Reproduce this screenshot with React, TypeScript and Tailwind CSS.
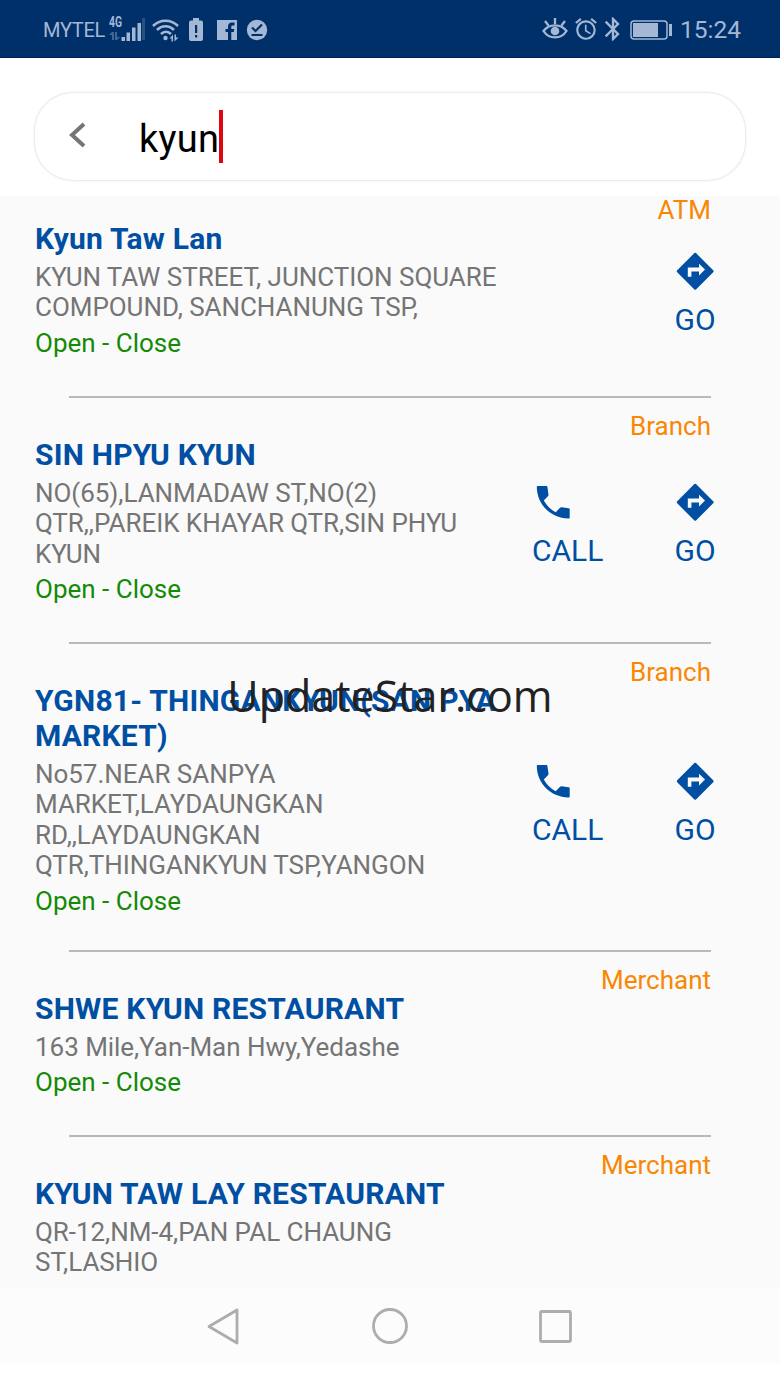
import React from 'react';
import { MdAlarm, MdBluetooth } from 'react-icons/md';
import { clsx } from 'clsx';

interface Place {
  type: string;
  name: string[];
  address: string[];
  hours?: string;
  call?: boolean;
  go?: boolean;
  // row height and space above the action icons
  spacing: string;
  actionTop: string;
}

const places: Place[] = [
  {
    type: 'ATM',
    name: ['Kyun Taw Lan'],
    address: ['KYUN TAW STREET, JUNCTION SQUARE', 'COMPOUND, SANCHANUNG TSP,'],
    hours: 'Open - Close',
    go: true,
    spacing: 'h-[216px]',
    actionTop: 'pt-[28px]',
  },
  {
    type: 'Branch',
    name: ['SIN HPYU KYUN'],
    address: ['NO(65),LANMADAW ST,NO(2)', 'QTR,,PAREIK KHAYAR QTR,SIN PHYU', 'KYUN'],
    hours: 'Open - Close',
    call: true,
    go: true,
    spacing: 'h-[246px]',
    actionTop: 'pt-[43px]',
  },
  {
    type: 'Branch',
    name: ['YGN81- THINGANKYUN(SAN PYA', 'MARKET)'],
    address: ['No57.NEAR SANPYA', 'MARKET,LAYDAUNGKAN', 'RD,,LAYDAUNGKAN', 'QTR,THINGANKYUN TSP,YANGON'],
    hours: 'Open - Close',
    call: true,
    go: true,
    spacing: 'h-[308px]',
    actionTop: 'pt-[76px]',
  },
  {
    type: 'Merchant',
    name: ['SHWE KYUN RESTAURANT'],
    address: ['163 Mile,Yan-Man Hwy,Yedashe'],
    hours: 'Open - Close',
    spacing: 'h-[185px]',
    actionTop: 'pt-0',
  },
  {
    type: 'Merchant',
    name: ['KYUN TAW LAY RESTAURANT'],
    address: ['QR-12,NM-4,PAN PAL CHAUNG', 'ST,LASHIO'],
    spacing: 'h-[216px]',
    actionTop: 'pt-0',
  },
];

const PhoneIcon: React.FC = () => (
  <svg className="mb-[9px] size-[44px]" viewBox="0 0 44 44" fill="currentColor">
    <path d="M5.900 6h8.300c.8 0 1.100.4 1.200 1.100l1.100 7.400c.1.700-.1 1.200-.6 1.700l-4.100 4.300c3 5.300 6.700 9 11.900 11.700l4.300-4.400c.5-.5 1-.7 1.700-.6l6.900 1c.8.1 1.100.5 1.100 1.200v8.100c0 .7-.4 1.100-1.100 1.100C18.200 38.100 4.900 24 4.800 7.100c0-.7.4-1.100 1.100-1.100z" />
  </svg>
);

const DirectionsIcon: React.FC = () => (
  <svg className="mb-[9px] size-[44px]" viewBox="0 0 44 44" fill="currentColor">
    <path d="M23 4.100l17.200 17.200q1 1 0 2L23 40.400q-.8.800-1.600 0L4.200 23.300q-1-1 0-2L21.400 4.100q.8-.8 1.600 0z" />
    <path d="M14.800 27.700v-9.200h11.200v-3.800l6 5.900-6 5.900v-4h-7.600v5.200z" fill="#fafafa" />
  </svg>
);

const StatusBar: React.FC = () => (
  <header className="flex h-[58px] shrink-0 items-center border-b border-[#00205a] bg-[#00306a] pt-[2px] pr-[38px] pl-[43px] text-[#a4b8d6]">
    <span className="w-[62px] text-[20px] tracking-[-0.3px] whitespace-nowrap">MYTEL</span>

    {/* 4G signal */}
    <svg className="ml-1 h-[28px] w-[38px]" viewBox="0 0 38 28" fill="currentColor">
      <text x="0" y="11" fontSize="14" fontWeight="700" textLength="13" lengthAdjust="spacingAndGlyphs">4G</text>
      <g opacity=".4">
        <path d="M3 16v8H5v-8zM0 19l3-3v3zM8 16v8H6v-8zM8 24l3-3H8z" />
        <path d="M33 2h3v22h-3z" opacity=".6" />
      </g>
      <path d="M12.500 21h3.500v4h-3.500zM17.500 16.500h3.500V25h-3.500zM23 11.500h3.500V25H23zM28.500 7H32v18h-3.500z" />
    </svg>

    {/* Wi-Fi */}
    <svg className="mb-[2px] ml-[5px] h-[28px] w-[28px]" viewBox="0 0 28 28" fill="none" stroke="currentColor" strokeWidth="2.600">
      <path d="M1 11c7-7 18-7 25 0M5 15c5-5 12-5 17 0M9 19c3-3 7-3 10 0" />
      <circle cx="13.500" cy="23" r="2.200" fill="currentColor" stroke="none" />
      <path d="M17.500 23.500l3.500-4v7h-1.500v-3zM22.500 19.500v7l4-4H24v-3z" fill="currentColor" stroke="none" />
    </svg>

    {/* battery warning */}
    <svg className="ml-[8px] h-[24px] w-[16px]" viewBox="0 0 16 24" fill="currentColor">
      <path d="M5 0h6v2.500h2a2 2 0 0 1 2 2V21a2 2 0 0 1-2 2H3a2 2 0 0 1-2-2V4.500a2 2 0 0 1 2-2h2z" />
      <path d="M7 7h2.200v8H7zM7 17h2.200v2.400H7z" fill="#00306a" />
    </svg>

    {/* Facebook */}
    <svg className="ml-[13px] h-[20px] w-[20px]" viewBox="0 0 20 20">
      <path d="M0 0h20v20H0z" fill="currentColor" />
      <path d="M11 20v-8H8.500V9H11V6.500C11 4 12.600 2.500 15 2.500h2.500v3h-1.700c-1 0-1.500.5-1.500 1.300V9h3l-.5 3h-2.500v8z" fill="#00306a" />
    </svg>

    {/* done */}
    <svg className="ml-[9px] h-[22px] w-[22px]" viewBox="0 0 22 22">
      <circle cx="11" cy="11" r="10.200" fill="currentColor" />
      <path d="M6 8.500l3.500 3.500L16 5.500M5.500 16h11" fill="none" stroke="#00306a" strokeWidth="2.200" />
    </svg>

    <div className="ml-auto flex items-center">
      {/* eye comfort */}
      <svg className="mb-[2px] h-[24px] w-[26px]" viewBox="0 0 26 24" fill="none" stroke="currentColor" strokeWidth="2.300">
        <path d="M1.500 14C7 6.500 19 6.500 24.500 14 19 22.500 7 22.500 1.500 14zM13 1v6M3 4l3.500 4.500M23 4l-3.500 4.500" />
        <circle cx="13" cy="14" r="4.300" fill="currentColor" stroke="none" />
      </svg>
      <MdAlarm className="mb-px ml-[5px] h-[26px] w-[26px]" />
      <MdBluetooth className="mb-px h-[28px] w-[28px]" />
      <svg className="ml-[3px] h-[20px] w-[43px]" viewBox="0 0 43 20">
        <rect x="1" y="1" width="36" height="18" rx="3" fill="none" stroke="currentColor" strokeWidth="1.500" />
        <path d="M3 3h25v14H3zM39 4h3v12h-3z" fill="currentColor" />
      </svg>
      <span className="mt-px ml-[7px] w-[62px] text-[24.500px] leading-none whitespace-nowrap">15:24</span>
    </div>
  </header>
);

const SearchBar: React.FC = () => (
  <div className="h-[138px] shrink-0 bg-white px-[35px] pt-[35px]">
    <div className="flex h-[87px] items-center rounded-[38px] bg-white pl-[33px] shadow-[0_0_2px_1px_rgba(0,0,0,0.1)]">
      <svg className="mb-[3px] h-[28px] w-[18px]" viewBox="0 0 18 28" fill="none" stroke="#757575" strokeWidth="4">
        <path d="M16 3L4 14l12 11" />
      </svg>
      <span className="mt-[4px] ml-[53px] text-[38px] leading-[52px] tracking-[0.3px] text-black">kyun</span>
      <span className="h-[53px] w-1 bg-[#e0060f]" />
    </div>
  </div>
);

const PlaceItem: React.FC<{ place: Place }> = ({ place }) => (
  <li className={clsx('flex shrink-0 flex-col pt-[13px] pl-[35px]', place.spacing)}>
    <p className="mr-[69px] -mb-1 text-right text-[26px] leading-[30px] text-[#f98703]">{place.type}</p>
    <div className="flex flex-1">
      <div className="w-[480px] whitespace-nowrap">
        <h2 className="text-[30px] leading-[35px] font-bold tracking-[0.22px] text-[#004fa3]">
          {place.name.map(line => <span key={line} className="block">{line}</span>)}
        </h2>
        <p className="mt-[6px] text-[26px] leading-[30.400px] tracking-[-0.04px] text-[#757575]">
          {place.address.map(line => <span key={line} className="block">{line}</span>)}
        </p>
        {place.hours && <p className="mt-[5px] text-[26px] leading-[30px] text-[#148a06]">{place.hours}</p>}
      </div>
      <div className={clsx('flex flex-1 text-[30px] leading-[35px] text-[#004fa3]', place.actionTop)}>
        <div className="w-[126px] pl-[17px]">
          {place.call && (
            <>
              <PhoneIcon />
              CALL
            </>
          )}
        </div>
        <div className="w-[108px]">
          {place.go && (
            <div className="flex flex-col items-center">
              <DirectionsIcon />
              GO
            </div>
          )}
        </div>
      </div>
    </div>
    <div className="mr-[69px] ml-[34px] h-[2px] bg-[#b9b9b9]" />
  </li>
);

const NavBar: React.FC = () => (
  <nav className="h-[98px] shrink-0 bg-white">
    <div className="flex h-[76px] items-center justify-between bg-[#fcfcfc] pr-[208px] pl-[206px]">
      <svg className="h-[38px] w-[34px]" viewBox="0 0 34 38" fill="none" stroke="#adadad" strokeWidth="2.800" strokeLinejoin="round">
        <path d="M3 19.500L31 3v33z" />
      </svg>
      <svg className="size-[36px]" viewBox="0 0 36 36" fill="none" stroke="#adadad" strokeWidth="2.800">
        <circle cx="18" cy="18" r="16.500" />
      </svg>
      <svg className="size-[33px]" viewBox="0 0 33 33" fill="none" stroke="#adadad" strokeWidth="2.800">
        <rect x="1.500" y="1.500" width="30" height="30" rx="1.500" />
      </svg>
    </div>
  </nav>
);

const App: React.FC = () => {
  return (
    <div className="relative flex h-[1386px] w-[780px] flex-col overflow-hidden bg-white font-['Roboto',sans-serif]">
      <StatusBar />
      <SearchBar />
      <main className="min-h-0 flex-1 overflow-hidden bg-[#fafafa]">
        <ul className="-mt-[14px] flex flex-col">
          {places.map(place => <PlaceItem key={place.name[0]} place={place} />)}
        </ul>
      </main>
      <NavBar />
      <div className="absolute inset-x-0 top-[667px] text-center font-['Open_Sans',sans-serif] text-[43px] leading-[58px] text-[#222]">
        UpdateStar.com
      </div>
    </div>
  );
};

export default App;
